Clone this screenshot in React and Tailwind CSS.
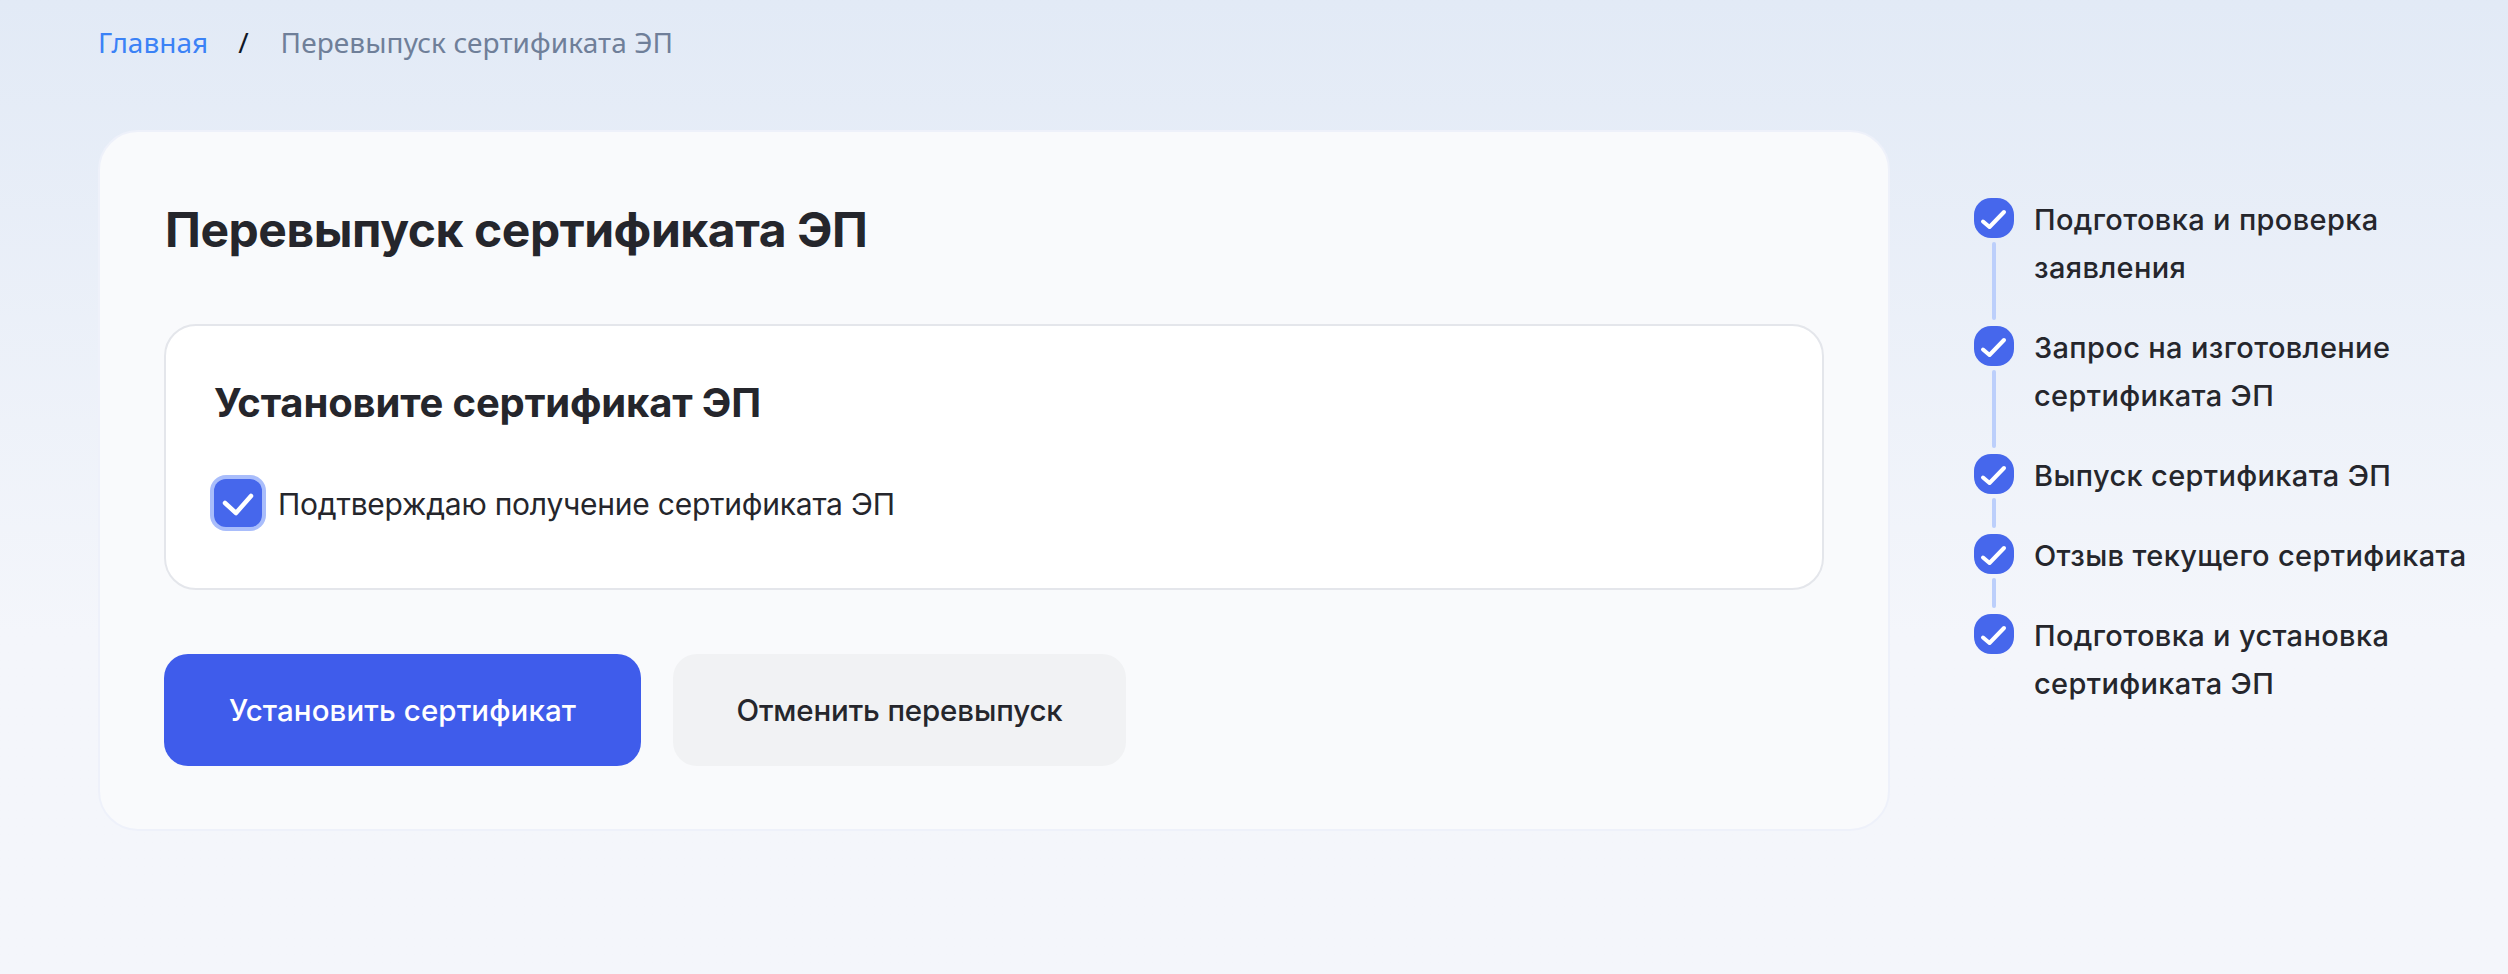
import React from 'react'

const steps = [
  { lines: ['Подготовка и проверка', 'заявления'] },
  { lines: ['Запрос на изготовление', 'сертификата ЭП'] },
  { lines: ['Выпуск сертификата ЭП'] },
  { lines: ['Отзыв текущего сертификата'] },
  { lines: ['Подготовка и установка', 'сертификата ЭП'] },
]

function StepCheck() {
  return (
    <div className="w-10 h-10 shrink-0 rounded-[17px] bg-[#4667ec]">
      <svg viewBox="0 0 40 40" className="w-10 h-10" fill="none">
        <path d="M9 23.5L15.5 29L30 14" stroke="#fff" strokeWidth="4" strokeLinecap="round" strokeLinejoin="round" />
      </svg>
    </div>
  )
}

function Step({ step, last }) {
  return (
    <div className="flex gap-5">
      <div className="flex flex-col items-center w-10">
        <StepCheck />
        {!last && <div className="w-1 flex-1 mt-1 mb-[6px] rounded-full bg-[#bccffb]" />}
      </div>
      <div className={last ? '-mt-[2px]' : '-mt-[2px] pb-[34px]'}>
        {step.lines.map((line) => (
          <p key={line} className="text-[29px] leading-[48px] font-medium text-[#25262c] whitespace-nowrap tracking-[0.35px]">
            {line}
          </p>
        ))}
      </div>
    </div>
  )
}

function App() {
  return (
    <div className="h-[974px] overflow-hidden px-[98px] pt-[22px] bg-linear-to-b from-[#e2eaf6] to-[#f4f6fb] to-65% font-['Inter',sans-serif]">
      <nav className="flex items-center h-10 mb-[68px] text-[28px] font-['Noto_Sans',sans-serif]">
        <a className="text-[#3b82f6]">Главная</a>
        <span className="mx-[30px] text-[#111827]">/</span>
        <span className="text-[#6f7f99] ml-[2px] tracking-[0.1px]">Перевыпуск сертификата ЭП</span>
      </nav>

      <div className="flex gap-[84px] items-start">
        <div className="w-[1792px] shrink-0 rounded-[40px] border-2 border-[#eef1fa] bg-[#f9fafc] px-16 pt-[68px] pb-[63px]">
          <h1 className="ml-[1px] text-[48px] leading-[60px] font-bold text-[#25262c] tracking-[-0.45px] mb-[64px]">Перевыпуск сертификата ЭП</h1>

          <div className="rounded-[32px] border-2 border-[#e4e6eb] bg-white px-12 pt-[53px] pb-[60px]">
            <h2 className="text-[40px] leading-[48px] font-bold text-[#25262c] tracking-[-0.15px] mb-[51px]">Установите сертификат ЭП</h2>
            <label className="flex items-center gap-4">
              <div className="w-12 h-12 rounded-xl bg-[#4667ec] ring-4 ring-[#a9bdfb]">
                <svg viewBox="0 0 48 48" className="w-12 h-12" fill="none">
                  <path d="M11 24L22 34L37 17" stroke="#fff" strokeWidth="4.5" strokeLinecap="round" strokeLinejoin="round" />
                </svg>
              </div>
              <span className="mt-[2px] text-[30px] leading-[48px] text-[#25262c] tracking-[-0.23px]">Подтверждаю получение сертификата ЭП</span>
            </label>
          </div>

          <div className="flex gap-8 mt-[64px]">
            <button className="h-28 w-[477px] rounded-3xl bg-[#3f5ceb] text-white text-[29.5px] font-medium tracking-[0.1px]">Установить сертификат</button>
            <button className="h-28 w-[453px] rounded-3xl bg-[#f1f2f4] text-[#25262c] text-[29.5px] font-medium tracking-[-0.15px]">Отменить перевыпуск</button>
          </div>
        </div>

        <div className="pt-[68px]">
          {steps.map((step, i) => (
            <Step key={i} step={step} last={i === steps.length - 1} />
          ))}
        </div>
      </div>
    </div>
  )
}

export default App
